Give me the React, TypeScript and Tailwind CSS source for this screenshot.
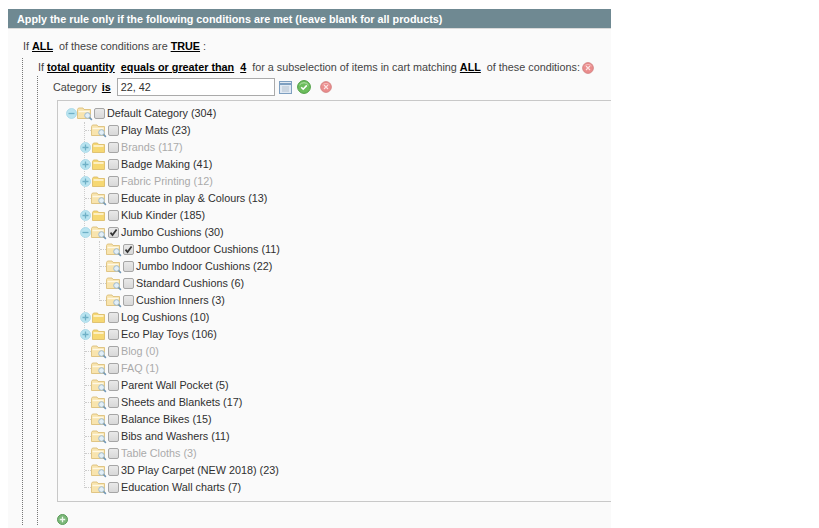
type Node = { label: string; off?: boolean; open?: boolean; more?: boolean; checked?: boolean; kids?: Node[] }

const tree: Node[] = [
  { label: 'Play Mats (23)' },
  { label: 'Brands (117)', off: true, more: true },
  { label: 'Badge Making (41)', more: true },
  { label: 'Fabric Printing (12)', off: true, more: true },
  { label: 'Educate in play & Colours (13)' },
  { label: 'Klub Kinder (185)', more: true },
  {
    label: 'Jumbo Cushions (30)',
    open: true,
    checked: true,
    kids: [
      { label: 'Jumbo Outdoor Cushions (11)', checked: true },
      { label: 'Jumbo Indoor Cushions (22)' },
      { label: 'Standard Cushions (6)' },
      { label: 'Cushion Inners (3)' },
    ],
  },
  { label: 'Log Cushions (10)', more: true },
  { label: 'Eco Play Toys (106)', more: true },
  { label: 'Blog (0)', off: true },
  { label: 'FAQ (1)', off: true },
  { label: 'Parent Wall Pocket (5)' },
  { label: 'Sheets and Blankets (17)' },
  { label: 'Balance Bikes (15)' },
  { label: 'Bibs and Washers (11)' },
  { label: 'Table Cloths (3)', off: true },
  { label: '3D Play Carpet (NEW 2018) (23)' },
  { label: 'Education Wall charts (7)' },
]

function Toggle({ open }: { open?: boolean }) {
  return (
    <svg width="11" height="11" viewBox="0 0 11 11" className="relative shrink-0">
      <circle cx="5.5" cy="5.5" r="5" fill="#b9e4f0" stroke="#a3d6e6" strokeWidth="0.8" />
      <path d={open ? 'M2.5 5.5h6' : 'M2.5 5.5h6M5.5 2.5v6'} stroke="#6fb0c6" strokeWidth="1.3" />
    </svg>
  )
}

function Folder({ leaf }: { leaf?: boolean }) {
  if (!leaf) {
    return (
      <svg width="16" height="14" viewBox="0 0 16 14" className="shrink-0">
        <path d="M1.5 3.5V11.5h12V3.5H7.5L6.5 2H2.5Z" fill="#f6d873" stroke="#dcbd6b" strokeWidth="0.9" />
        <path d="M2.5 5h10" stroke="#fff6d6" strokeWidth="1.6" />
      </svg>
    )
  }
  return (
    <svg width="16" height="14" viewBox="0 0 16 14" className="shrink-0">
      <path d="M0.5 2.5V11.5h13V2.5H7L6 1H1.5Z" fill="#f8e4ae" stroke="#dcc07a" strokeWidth="0.9" />
      <path d="M1.5 4.5h11" stroke="#fff8e4" strokeWidth="1.4" />
      <circle cx="10.5" cy="8.5" r="2.8" fill="#e3eff7" stroke="#9fbace" strokeWidth="1" />
      <path d="M12.5 10.5l2.4 2.4" stroke="#6f96b6" strokeWidth="1.6" />
    </svg>
  )
}

function Check({ on }: { on?: boolean }) {
  return (
    <span className="flex h-[11px] w-[11px] shrink-0 items-center justify-center rounded-[2px] border border-[#a6a6a6] bg-gradient-to-b from-[#e9e9e9] to-[#d8d8d8]">
      {on && (
        <svg width="9" height="9" viewBox="0 0 9 9">
          <path d="M1.5 4.6l2 2.4L7.6 1.4" fill="none" stroke="#333" strokeWidth="1.7" />
        </svg>
      )}
    </span>
  )
}

function Remove({ className }: { className?: string }) {
  return (
    <svg width="12" height="12" viewBox="0 0 12 12" className={className}>
      <circle cx="6" cy="6" r="5.4" fill="#ea8c8c" stroke="#cf7c7c" strokeWidth="0.8" />
      <path d="M4 4l4 4M8 4l-4 4" stroke="#fbe3e3" strokeWidth="1.1" />
      <path d="M2.5 4a4 3 0 0 1 7 0" fill="none" stroke="#f9c4c4" strokeWidth="0.8" />
    </svg>
  )
}

function Row({ node, last }: { node: Node; last: boolean }) {
  const hasToggle = node.more || node.open
  return (
    <li className="relative">
      {last && <span className="absolute top-[9px] bottom-0 -left-px w-px bg-[#fafafa]" />}
      <div className="flex h-[17px] items-center">
        {hasToggle ? <span className="-ml-[5px]"><Toggle open={node.open} /></span> : <span className="w-[6px] shrink-0 border-t border-dotted border-[#ccc]" />}
        <Folder leaf={!node.more} />
        <span className="ml-px">
          <Check on={node.checked} />
        </span>
        <span className={`ml-[2px] whitespace-nowrap ${node.off ? 'text-[#aaa]' : 'text-[#2f2f2f]'}`}>{node.label}</span>
      </div>
      {node.kids && (
        <ul className="ml-[14px] border-l border-dotted border-[#ccc]">
          {node.kids.map((k, i) => (
            <Row key={k.label} node={k} last={i === node.kids!.length - 1} />
          ))}
        </ul>
      )}
    </li>
  )
}

function Link({ children }: { children: React.ReactNode }) {
  return <b className="font-bold text-black underline">{children}</b>
}

export default function App() {
  return (
    <div className="h-[528px] overflow-hidden bg-white pt-[9px] pl-2 font-['Liberation_Sans',Arial,sans-serif] text-[10.8px] text-[#444]">
      <div className="h-[519px] w-[603px] overflow-hidden bg-[#fafafa]">
        <div className="h-[19px] bg-[#6f8992] pl-[9px] text-[10.8px] leading-[20px] font-bold text-white">
          Apply the rule only if the following conditions are met (leave blank for all products)
        </div>
        <div className="h-px bg-[#d9d9d9]" />
        <p className="mt-[9px] ml-[15px] h-[20px] leading-[17px]">
          If <Link>ALL</Link>&nbsp; of these conditions are <Link>TRUE</Link> :
        </p>
        <div className="ml-[14px] border-l border-dotted border-[#777] pl-[15px]">
          <div className="flex h-[18px] items-center">
            <span className="whitespace-nowrap">
              If <Link>total quantity</Link>&nbsp; <Link>equals or greater than</Link>&nbsp; <Link>4</Link>&nbsp; for a subselection of items in cart matching <Link>ALL</Link>&nbsp; of these conditions:
            </span>
            <Remove className="mt-[2px] ml-[2px]" />
          </div>
          <div className="-ml-px border-l border-dotted border-[#777] pl-[15px]">
            <div className="flex h-[22px] items-center">
              <span>Category</span>
              <span className="ml-[5px]"><Link>is</Link></span>
              <span className="ml-[6px] h-[18px] w-[158px] border border-[#aaa] bg-white pl-[3px] text-[10.8px] leading-[17px] text-[#2f2f2f]">22, 42</span>
              <svg width="13" height="13" viewBox="0 0 13 13" className="ml-[4px]">
                <rect x="0.5" y="0.5" width="12" height="12" fill="#dfe8f2" stroke="#7e9fc0" />
                <path d="M1 3h11" stroke="#7e9fc0" strokeWidth="2" />
                <path d="M3 6h7M3 8h7M3 10h7" stroke="#b5c2cf" />
              </svg>
              <svg width="14" height="14" viewBox="0 0 14 14" className="ml-[5px]">
                <circle cx="7" cy="7" r="6.4" fill="#6cbd5c" stroke="#4f9e44" />
                <path d="M2.5 5a5 4 0 0 1 9 0" fill="none" stroke="#b9e3ae" strokeWidth="1" />
                <path d="M4.2 7.2l2 2 3.6-3.8" fill="none" stroke="#fff" strokeWidth="1.6" />
              </svg>
              <Remove className="ml-[9px]" />
            </div>
            <div className="mt-[2px] ml-[4px] h-[402px] border border-r-0 border-[#c8c8c8] py-[4px] pl-2">
              <div className="flex h-[17px] items-center">
                <Toggle open />
                <Folder leaf />
                <span className="ml-px"><Check /></span>
                <span className="ml-[2px] text-[#2f2f2f]">Default Category (304)</span>
              </div>
              <ul className="ml-[18px] border-l border-dotted border-[#ccc]">
                {tree.map((n, i) => (
                  <Row key={n.label} node={n} last={i === tree.length - 1} />
                ))}
              </ul>
            </div>
            <div className="flex h-[23px] items-end pl-[4px]">
              <svg width="11" height="11" viewBox="0 0 11 11">
                <circle cx="5.5" cy="5.5" r="5" fill="#7cb87a" stroke="#5a9a58" />
                <path d="M2.8 5.5h5.4M5.5 2.8v5.4" stroke="#eef7ee" strokeWidth="1.3" />
              </svg>
            </div>
          </div>
        </div>
      </div>
    </div>
  )
}
